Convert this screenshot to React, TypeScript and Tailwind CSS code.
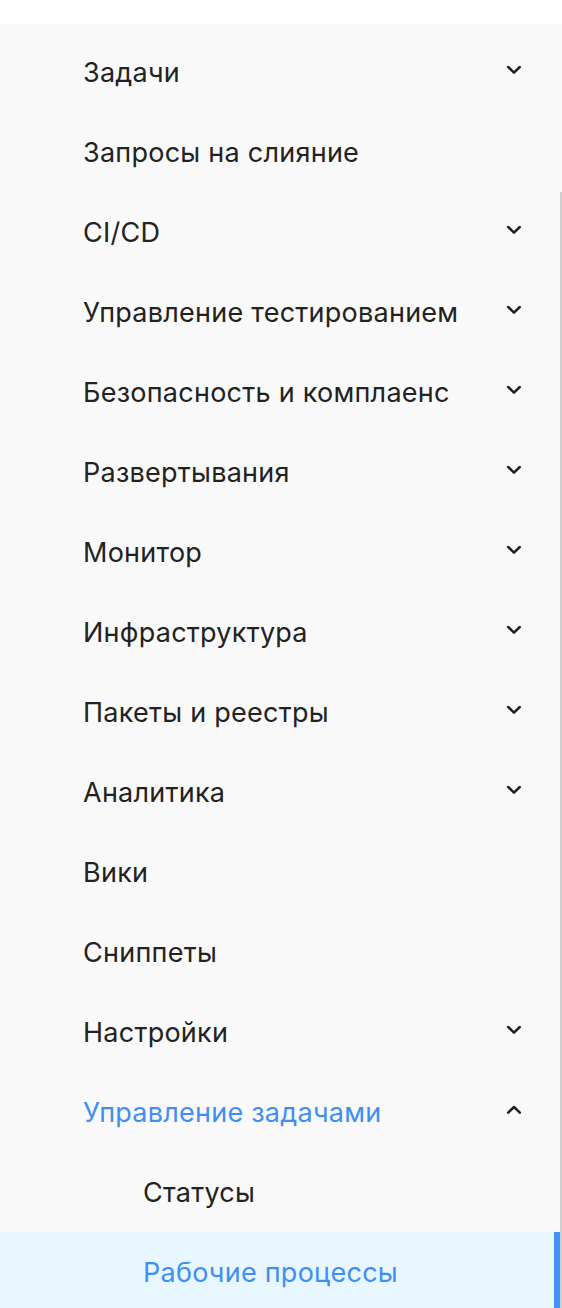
import React from "react";

const items: { label: string; chevron?: "down" | "up"; active?: boolean; sub?: boolean; selected?: boolean }[] = [
  { label: "Задачи", chevron: "down" },
  { label: "Запросы на слияние" },
  { label: "CI/CD", chevron: "down" },
  { label: "Управление тестированием", chevron: "down" },
  { label: "Безопасность и комплаенс", chevron: "down" },
  { label: "Развертывания", chevron: "down" },
  { label: "Монитор", chevron: "down" },
  { label: "Инфраструктура", chevron: "down" },
  { label: "Пакеты и реестры", chevron: "down" },
  { label: "Аналитика", chevron: "down" },
  { label: "Вики" },
  { label: "Сниппеты" },
  { label: "Настройки", chevron: "down" },
  { label: "Управление задачами", chevron: "up", active: true },
  { label: "Статусы", sub: true },
  { label: "Рабочие процессы", sub: true, selected: true },
];

function Chevron({ dir }: { dir: "down" | "up" }) {
  return (
    <svg width="16" height="16" viewBox="0 0 16 16" fill="none" className="shrink-0 -mt-[4px]">
      {dir === "down" ? (
        <path d="M2.2 5 L8 10.6 L13.8 5" stroke="#1f1f1f" strokeWidth="2.5" strokeLinecap="round" strokeLinejoin="round" />
      ) : (
        <path d="M2.2 10.6 L8 5 L13.8 10.6" stroke="#1f1f1f" strokeWidth="2.5" strokeLinecap="round" strokeLinejoin="round" />
      )}
    </svg>
  );
}

export default function App() {
  return (
    <div className="w-[562px] h-[1308px] overflow-hidden bg-white" style={{ fontFamily: "Inter, 'Noto Sans', sans-serif" }}>
      <div className="mt-[24px] relative bg-[#f9f9f9] h-[1284px] pt-[8px]">
        {items.map((it, i) => (
          <div
            key={i}
            className={`relative h-[80px] flex items-center justify-between pr-[40px] ${it.sub ? "pl-[143px]" : "pl-[83px]"} ${it.selected ? "bg-[#e8f6ff]" : ""}`}
          >
            <span className={`text-[27px] leading-none tracking-[0.25px] ${it.active || it.selected ? "text-[#3f8ef5]" : "text-[#222222]"}`}>
              {it.label}
            </span>
            {it.chevron && <Chevron dir={it.chevron} />}
            {it.selected && <div className="absolute right-[2px] top-0 bottom-0 w-[6px] bg-[#4391f7]" />}
          </div>
        ))}
        <div className="absolute right-0 top-[168px] bottom-0 w-[2px] bg-[#cfcfcf]" />
      </div>
    </div>
  );
}
